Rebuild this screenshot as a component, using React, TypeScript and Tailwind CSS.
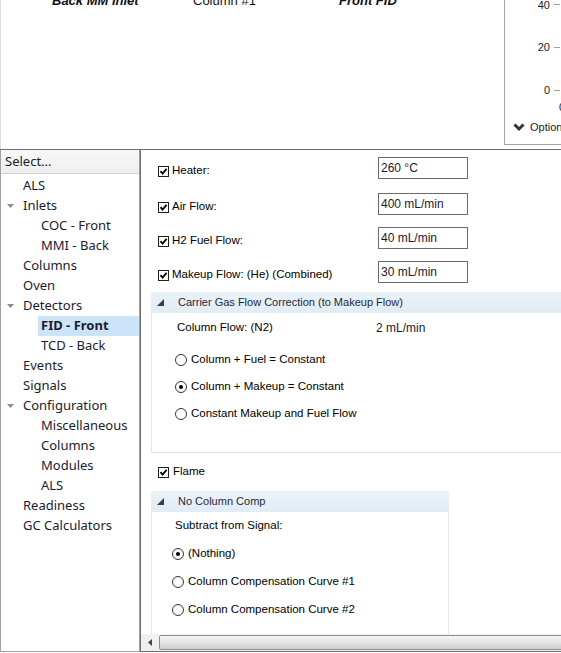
import React from "react";

type TreeItem = { label: string; level: 0 | 1; open?: boolean; selected?: boolean };

const tree: TreeItem[] = [
  { label: "ALS", level: 0 },
  { label: "Inlets", level: 0, open: true },
  { label: "COC - Front", level: 1 },
  { label: "MMI - Back", level: 1 },
  { label: "Columns", level: 0 },
  { label: "Oven", level: 0 },
  { label: "Detectors", level: 0, open: true },
  { label: "FID - Front", level: 1, selected: true },
  { label: "TCD - Back", level: 1 },
  { label: "Events", level: 0 },
  { label: "Signals", level: 0 },
  { label: "Configuration", level: 0, open: true },
  { label: "Miscellaneous", level: 1 },
  { label: "Columns", level: 1 },
  { label: "Modules", level: 1 },
  { label: "ALS", level: 1 },
  { label: "Readiness", level: 0 },
  { label: "GC Calculators", level: 0 },
];

const flows = [
  { label: "Heater:", value: "260 °C", gap: "mt-0" },
  { label: "Air Flow:", value: "400 mL/min", gap: "mt-[14px]" },
  { label: "H2 Fuel Flow:", value: "40 mL/min", gap: "mt-[12px]" },
  { label: "Makeup Flow: (He) (Combined)", value: "30 mL/min", gap: "mt-[12px]" },
];

function Checkbox() {
  return (
    <span className="w-[11px] h-[11px] shrink-0 border border-[#1e1e1e] bg-white flex items-center justify-center">
      <svg width="9" height="9" viewBox="0 0 9 9">
        <path d="M1.5 4.2 L3.6 6.6 L7.6 1.8" fill="none" stroke="#000" strokeWidth="1.8" />
      </svg>
    </span>
  );
}

function Radio({ checked }: { checked?: boolean }) {
  return (
    <span className="w-[12px] h-[12px] shrink-0 rounded-full border border-[#333] bg-white flex items-center justify-center">
      {checked && <span className="w-[4px] h-[4px] rounded-full bg-black" />}
    </span>
  );
}

function GroupHeader({ title }: { title: string }) {
  return (
    <div className="h-[21px] flex items-center bg-gradient-to-b from-[#eaf2f9] to-[#e2ecf5] pl-[6px]">
      <svg width="7" height="7" viewBox="0 0 7 7" className="shrink-0">
        <polygon points="7,0 7,7 0,7" fill="#3c3c3c" />
      </svg>
      <span className="ml-[14px] text-[11px] text-[#1f2a36] font-['Liberation_Sans',sans-serif]">{title}</span>
    </div>
  );
}

export default function App() {
  return (
    <div className="w-[561px] h-[653px] bg-white overflow-hidden font-['Liberation_Sans',sans-serif]">
      {/* instrument diagram + chart strip */}
      <div className="h-[149px] flex border-l border-[#dcdcdc]">
        <div className="flex-1 flex items-start pl-[51px] -mt-[7px] text-[13px] leading-[16px] text-[#111]">
          <span className="w-[141px] font-bold italic">Back MM Inlet</span>
          <span className="w-[146px]">Column #1</span>
          <span className="font-bold italic">Front FID</span>
        </div>
        <div className="relative w-[57px] h-[145px] shrink-0 border-l border-b border-[#a3a3a3] text-[11px] text-[#222]">
          <span className="absolute right-[11px] -top-[2px] leading-[14px]">40</span>
          <span className="absolute right-[1px] top-[4px] w-[6px] h-px bg-[#a0a0a0]" />
          <span className="absolute right-[11px] top-[40px] leading-[14px]">20</span>
          <span className="absolute right-[1px] top-[47px] w-[6px] h-px bg-[#a0a0a0]" />
          <span className="absolute right-[11px] top-[83px] leading-[14px]">0</span>
          <span className="absolute right-[1px] top-[90px] w-[6px] h-px bg-[#a0a0a0]" />
          <span className="absolute left-[54px] top-[100px] leading-[14px]">0</span>
          <div className="absolute left-[8px] top-[120px] flex items-center gap-[5px]">
            <svg width="12" height="9" viewBox="0 0 12 9">
              <polyline points="1.5,1.5 6,6 10.5,1.5" fill="none" stroke="#333" strokeWidth="3" />
            </svg>
            <span className="leading-[14px]">Options</span>
          </div>
        </div>
      </div>

      <div className="flex h-[503px] border-t border-[#6e6e6e]">
        {/* navigation tree */}
        <aside className="w-[140px] h-[502px] shrink-0 border-l border-r border-b border-[#a0a0a0] bg-white font-['Noto_Sans',sans-serif] text-[13px] text-[#1b1b2e]">
          <div className="h-[24px] flex items-center pl-[4px] border-b border-[#d4d4d4] bg-gradient-to-b from-[#f8f8f8] to-[#efefef] text-[#222]">
            Select...
          </div>
          <div className="pt-[2px] flex flex-col">
            {tree.map((item, i) =>
              item.level === 0 ? (
                <div key={i} className="h-[20px] flex items-center pl-[6px]">
                  <span className="w-[16px] flex items-center">
                    {item.open && (
                      <svg width="7" height="4" viewBox="0 0 7 4">
                        <polygon points="0,0 7,0 3.5,4" fill="#8c8c8c" />
                      </svg>
                    )}
                  </span>
                  <span>{item.label}</span>
                </div>
              ) : (
                <div key={i} className="h-[20px] flex items-center pl-[37px]">
                  <span
                    className={
                      item.selected
                        ? "flex-1 h-full flex items-center pl-[3px] bg-[#cce4f7] font-bold"
                        : "pl-[3px]"
                    }
                  >
                    {item.label}
                  </span>
                </div>
              )
            )}
          </div>
        </aside>

        {/* detector settings */}
        <section className="flex-1 min-w-0 h-[502px] flex flex-col border-l border-b border-[#6e6e6e] overflow-hidden">
          <div className="flex-1 min-h-0 overflow-hidden text-[11.5px] text-black pt-[7px]">
            {flows.map((f) => (
              <div key={f.label} className={`${f.gap} h-[22px] flex items-start pl-[17px]`}>
                <div className="w-[220px] h-[14px] mt-[7px] flex items-center gap-[3px]">
                  <Checkbox />
                  <span>{f.label}</span>
                </div>
                <div className="w-[90px] h-[22px] border border-[#6b6b6b] flex items-center pl-[2px] text-[12px] text-[#1a1a2a]">
                  {f.value}
                </div>
              </div>
            ))}

            <div className="ml-[10px] mt-[9px] w-[440px]">
              <GroupHeader title="Carrier Gas Flow Correction (to Makeup Flow)" />
              <div className="h-[140px] border-l border-b border-[#e4e4e4] pl-[23px] pt-[7px]">
                <div className="h-[16px] flex items-center">
                  <span className="w-[201px] pl-[2px]">Column Flow: (N2)</span>
                  <span className="text-[12px] text-[#1a1a2a]">2 mL/min</span>
                </div>
                {[
                  { label: "Column + Fuel = Constant", checked: false },
                  { label: "Column + Makeup = Constant", checked: true },
                  { label: "Constant Makeup and Fuel Flow", checked: false },
                ].map((r, i) => (
                  <div key={r.label} className={`${i === 0 ? "mt-[16px]" : "mt-[11px]"} h-[16px] flex items-center gap-[4px]`}>
                    <Radio checked={r.checked} />
                    <span>{r.label}</span>
                  </div>
                ))}
              </div>
            </div>

            <div className="mt-[12px] h-[14px] pl-[17px] flex items-center gap-[4px]">
              <Checkbox />
              <span>Flame</span>
            </div>

            <div className="ml-[10px] mt-[12px] w-[298px]">
              <GroupHeader title="No Column Comp" />
              <div className="h-[140px] border-l border-r border-[#e6e6e6] pl-[23px] pt-[6px]">
                <div className="h-[16px] flex items-center">Subtract from Signal:</div>
                <div className="-ml-[3px]">
                  {[
                    { label: "(Nothing)", checked: true },
                    { label: "Column Compensation Curve #1", checked: false },
                    { label: "Column Compensation Curve #2", checked: false },
                  ].map((r) => (
                    <div key={r.label} className="mt-[12px] h-[16px] flex items-center gap-[4px]">
                      <Radio checked={r.checked} />
                      <span>{r.label}</span>
                    </div>
                  ))}
                </div>
              </div>
            </div>
          </div>

          {/* horizontal scrollbar */}
          <div className="h-[17px] shrink-0 flex items-center bg-[#f0f0f0]">
            <span className="w-[18px] flex justify-center">
              <svg width="4" height="7" viewBox="0 0 4 7">
                <polygon points="4,0 4,7 0,3.5" fill="#444" />
              </svg>
            </span>
            <div className="flex-1 h-[15px] -mr-[4px] rounded-l-[2px] border border-[#8e8e8e] bg-gradient-to-b from-[#f6f6f6] via-[#e4e4e4] to-[#cdcdcd]" />
          </div>
        </section>
      </div>
    </div>
  );
}
